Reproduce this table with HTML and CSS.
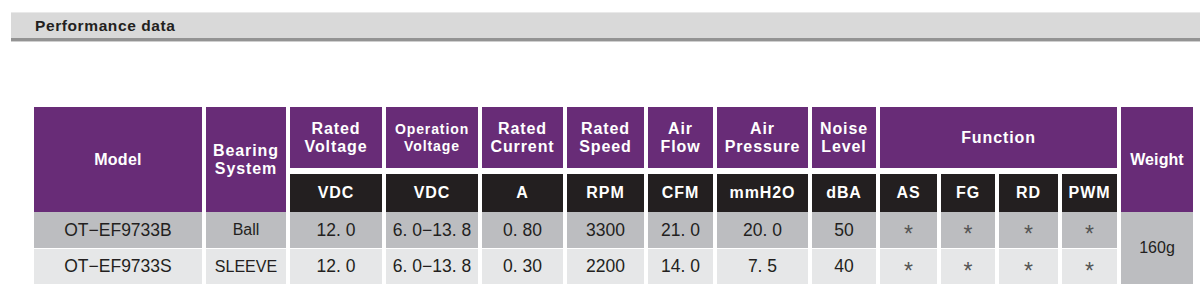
FILE: index.html
```html
<!DOCTYPE html>
<html>
<head>
<meta charset="utf-8">
<link rel="stylesheet" href="styles.css">
</head>
<body>
<div class="section-bar"><span class="section-title">Performance data</span></div>
<div class="perf-table">
  <div class="hd span-2">Model</div>
  <div class="hd span-2 wide">Bearing<br>System</div>
  <div class="hd wide">Rated<br>Voltage</div>
  <div class="hd wide small">Operation<br>Voltage</div>
  <div class="hd wide">Rated<br>Current</div>
  <div class="hd wide">Rated<br>Speed</div>
  <div class="hd wide">Air<br>Flow</div>
  <div class="hd wide">Air<br>Pressure</div>
  <div class="hd wide">Noise<br>Level</div>
  <div class="hd wide func">Function</div>
  <div class="hd span-2 weight">Weight</div>

  <div class="unit c3">VDC</div>
  <div class="unit">VDC</div>
  <div class="unit">A</div>
  <div class="unit">RPM</div>
  <div class="unit">CFM</div>
  <div class="unit">mmH2O</div>
  <div class="unit">dBA</div>
  <div class="unit">AS</div>
  <div class="unit">FG</div>
  <div class="unit">RD</div>
  <div class="unit">PWM</div>

  <div class="cell r1 c1">OT−EF9733B</div>
  <div class="cell r1 sm">Ball</div>
  <div class="cell r1">12. 0</div>
  <div class="cell r1">6. 0−13. 8</div>
  <div class="cell r1">0. 80</div>
  <div class="cell r1">3300</div>
  <div class="cell r1">21. 0</div>
  <div class="cell r1">20. 0</div>
  <div class="cell r1">50</div>
  <div class="cell r1 star">*</div>
  <div class="cell r1 star">*</div>
  <div class="cell r1 star">*</div>
  <div class="cell r1 star">*</div>
  <div class="cell weight-val">160g</div>

  <div class="cell r2 c1">OT−EF9733S</div>
  <div class="cell r2 sm">SLEEVE</div>
  <div class="cell r2">12. 0</div>
  <div class="cell r2">6. 0−13. 8</div>
  <div class="cell r2">0. 30</div>
  <div class="cell r2">2200</div>
  <div class="cell r2">14. 0</div>
  <div class="cell r2">7. 5</div>
  <div class="cell r2">40</div>
  <div class="cell r2 star">*</div>
  <div class="cell r2 star">*</div>
  <div class="cell r2 star">*</div>
  <div class="cell r2 star">*</div>
</div>
</body>
</html>
```
FILE: styles.css
```css
html, body {
  margin: 0;
  padding: 0;
  background: #ffffff;
}
body {
  font-family: "Liberation Sans", Arial, sans-serif;
  width: 1200px;
  height: 294px;
  overflow: hidden;
}
.section-bar {
  margin: 12px 0 0 11px;
  height: 25px;
  background: #d9d9d9;
  border-top: 1px solid #e9e9e9;
  border-bottom: 3px solid #939393;
  box-shadow: 0 1px 0 #cfcfcf;
  padding-left: 24px;
  display: flex;
  align-items: center;
}
.section-title {
  font-weight: bold;
  font-size: 15.5px;
  letter-spacing: 0.6px;
  color: #231f20;
}
.perf-table {
  display: grid;
  margin: 66px 0 0 34px;
  grid-template-columns: 168px 80px 92px 92px 81px 77px 65px 91px 64px 57px 54px 59px 55px 72px;
  grid-template-rows: 61px 6px 38px 36px 1px 35px;
  column-gap: 4px;
}
.hd {
  background: #682c77;
  color: #ffffff;
  font-weight: bold;
  font-size: 16px;
  line-height: 18px;
  letter-spacing: 0.3px;
  display: flex;
  align-items: center;
  justify-content: center;
  text-align: center;
  grid-row: 1;
}
.hd.wide { letter-spacing: 0.9px; }
.hd.small { font-size: 14px; letter-spacing: 0.9px; line-height: 17px; }
.hd.span-2 { grid-row: 1 / 4; }
.hd.func { grid-column: 10 / 14; }
.hd.weight { grid-column: 14; letter-spacing: 0.1px; }
.unit {
  grid-row: 3;
  background: #231f20;
  color: #ffffff;
  font-weight: bold;
  font-size: 16px;
  letter-spacing: 0.9px;
  display: flex;
  align-items: center;
  justify-content: center;
}
.unit.c3 { grid-column: 3; }
.cell {
  color: #231f20;
  font-size: 17.5px;
  display: flex;
  align-items: center;
  justify-content: center;
}
.cell.r1 { grid-row: 4; background: #bcbdc0; }
.cell.r2 { grid-row: 6; background: #e6e7e8; }
.cell.c1 { grid-column: 1; }
.cell.sm { font-size: 16px; }
.cell.star {
  font-size: 23px;
  color: #555555;
  padding-top: 9px;
  box-sizing: border-box;
}
.cell.weight-val {
  grid-column: 14;
  grid-row: 4 / 7;
  background: #bcbdc0;
  font-size: 16px;
}
```
